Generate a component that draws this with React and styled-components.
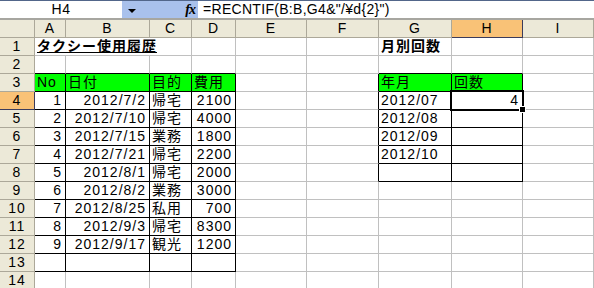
import React from "react";
import styled, { createGlobalStyle } from "styled-components";

const GlobalStyle = createGlobalStyle`
  html, body {
    margin: 0;
    padding: 0;
    background: #fff;
    overflow: hidden;
  }
  body {
    font-family: "Liberation Sans", "Noto Sans CJK JP", sans-serif;
    color: #000;
  }
`;

const Window = styled.div`
  width: 594px;
  height: 288px;
  overflow: hidden;
  background: #fff;
  display: flex;
  flex-direction: column;
`;

const FormulaBar = styled.div`
  display: flex;
  height: 17px;
  border-top: 1px solid #52668a;
  border-bottom: 2px solid #a7a6a0;
  flex-shrink: 0;
`;

const NameBox = styled.div`
  width: 122px;
  background: #fff;
  display: flex;
  align-items: center;
  justify-content: center;
  font-size: 14px;
  line-height: 17px;
  letter-spacing: 0.5px;
`;

const BlueStrip = styled.div`
  width: 76px;
  background: #a9c1ec;
  display: flex;
  align-items: center;
  justify-content: space-between;
  padding: 0 3px 0 6px;
  box-sizing: border-box;
`;

const DropArrow = styled.span`
  width: 0;
  height: 0;
  border-left: 4px solid transparent;
  border-right: 4px solid transparent;
  border-top: 4px solid #000;
  margin-top: 2px;
`;

const FxIcon = styled.span`
  font-family: "Liberation Serif", serif;
  font-style: italic;
  font-weight: bold;
  font-size: 14px;
  line-height: 17px;
  letter-spacing: -1px;
`;

const FormulaText = styled.div`
  flex: 1;
  background: #fff;
  font-size: 14px;
  line-height: 17px;
  letter-spacing: 0.3px;
  padding-left: 5px;
  white-space: nowrap;
`;

const Sheet = styled.div`
  display: grid;
  grid-template-columns: 35px 31px 84px 42px 44px 71px 72px 73px 71px 1fr;
  grid-auto-rows: 18px;
`;

const HeaderCell = styled.div`
  box-sizing: border-box;
  background: ${(p) => (p.$active ? "#f9c277" : "#ece9d8")};
  border-right: 1px solid ${(p) => (p.$active ? "#3b3b5b" : "#aca899")};
  border-bottom: 1px solid ${(p) => (p.$active ? "#3b3b5b" : "#aca899")};
  display: flex;
  align-items: center;
  justify-content: center;
  font-size: 14px;
  line-height: 17px;
  letter-spacing: 1px;
`;

const Cell = styled.div`
  position: relative;
  box-sizing: border-box;
  grid-column: span ${(p) => p.$span};
  background: ${(p) => p.$fill || "#fff"};
  border-right: 1px solid ${(p) => p.$right};
  border-bottom: 1px solid ${(p) => p.$bottom};
  display: flex;
  align-items: flex-end;
  justify-content: ${(p) => (p.$align === "right" ? "flex-end" : "flex-start")};
  padding: 0 3px 0 ${(p) => (p.$align === "right" ? 3 : 2)}px;
  font-size: 14px;
  line-height: 17px;
  letter-spacing: 1px;
  font-weight: ${(p) => (p.$bold ? 700 : 400)};
  text-decoration: ${(p) => (p.$underline ? "underline" : "none")};
  white-space: nowrap;
  z-index: ${(p) => (p.$selected ? 2 : 0)};
`;

const Selection = styled.div`
  position: absolute;
  top: -2px;
  left: -2px;
  right: -2px;
  bottom: -2px;
  border: 2px solid #000;
  box-shadow: inset 0 0 0 1px #fff;
  pointer-events: none;
`;

const FillHandle = styled.div`
  position: absolute;
  right: -4px;
  bottom: -4px;
  width: 5px;
  height: 5px;
  background: #000;
  border: 1px solid #fff;
`;

const COLS = ["A", "B", "C", "D", "E", "F", "G", "H", "I"];
const ROWS = 14;
const GREEN = "#00ff00";
const GRID = "#c0c0c0";

const BOXES = [
  { r1: 3, r2: 13, c1: 0, c2: 3 },
  { r1: 3, r2: 8, c1: 6, c2: 7 },
];

const inBox = (r, c) =>
  BOXES.some((b) => r >= b.r1 && r <= b.r2 && c >= b.c1 && c <= b.c2);

const trips = [
  ["2012/7/2", "帰宅", "2100"],
  ["2012/7/10", "帰宅", "4000"],
  ["2012/7/15", "業務", "1800"],
  ["2012/7/21", "帰宅", "2200"],
  ["2012/8/1", "帰宅", "2000"],
  ["2012/8/2", "業務", "3000"],
  ["2012/8/25", "私用", "700"],
  ["2012/9/3", "帰宅", "8300"],
  ["2012/9/17", "観光", "1200"],
];

const cells = {
  A1: { text: "タクシー使用履歴", bold: true, underline: true, span: 3 },
  G1: { text: "月別回数", bold: true },
  A3: { text: "No", fill: GREEN },
  B3: { text: "日付", fill: GREEN },
  C3: { text: "目的", fill: GREEN },
  D3: { text: "費用", fill: GREEN },
  G3: { text: "年月", fill: GREEN },
  H3: { text: "回数", fill: GREEN },
  G4: { text: "2012/07" },
  G5: { text: "2012/08" },
  G6: { text: "2012/09" },
  G7: { text: "2012/10" },
  H4: { text: "4", align: "right", selected: true },
};

trips.forEach(([date, purpose, cost], i) => {
  const r = i + 4;
  cells[`A${r}`] = { text: String(i + 1), align: "right" };
  cells[`B${r}`] = { text: date, align: "right" };
  cells[`C${r}`] = { text: purpose };
  cells[`D${r}`] = { text: cost, align: "right" };
});

const renderRow = (r) => {
  const out = [
    <HeaderCell key={`h${r}`} $active={r === 4}>
      {r}
    </HeaderCell>,
  ];
  let c = 0;
  while (c < COLS.length) {
    const data = cells[`${COLS[c]}${r}`] || {};
    const span = data.span || 1;
    const last = c + span - 1;
    let bottomBlack = false;
    for (let k = c; k <= last; k++) {
      if (inBox(r, k) || inBox(r + 1, k)) bottomBlack = true;
    }
    const rightBlack = inBox(r, last) || inBox(r, last + 1);
    out.push(
      <Cell
        key={`${COLS[c]}${r}`}
        $span={span}
        $fill={data.fill}
        $align={data.align}
        $bold={data.bold}
        $underline={data.underline}
        $selected={data.selected}
        $right={rightBlack ? "#000" : GRID}
        $bottom={bottomBlack ? "#000" : GRID}
      >
        {data.text}
        {data.selected && (
          <Selection>
            <FillHandle />
          </Selection>
        )}
      </Cell>
    );
    c += span;
  }
  return out;
};

export default function App() {
  return (
    <Window>
      <GlobalStyle />
      <FormulaBar>
        <NameBox>H4</NameBox>
        <BlueStrip>
          <DropArrow />
          <FxIcon>fx</FxIcon>
        </BlueStrip>
        <FormulaText>=RECNTIF(B:B,G4&amp;"/¥d{"{"}2{"}"}")</FormulaText>
      </FormulaBar>
      <Sheet>
        <HeaderCell />
        {COLS.map((col) => (
          <HeaderCell key={col} $active={col === "H"}>
            {col}
          </HeaderCell>
        ))}
        {Array.from({ length: ROWS }, (_, i) => renderRow(i + 1))}
      </Sheet>
    </Window>
  );
}
